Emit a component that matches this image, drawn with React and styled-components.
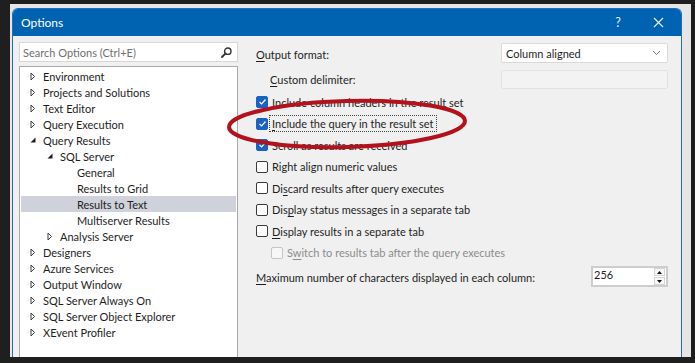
import React from 'react';
import styled, { createGlobalStyle } from 'styled-components';

const UI_FONT = `Lato, "Noto Sans", "Liberation Sans", sans-serif`;

const GlobalStyle = createGlobalStyle`
    html, body {
        margin: 0;
        padding: 0;
        background: #1f1f1f;
    }
    * {
        box-sizing: border-box;
    }
`;

const Page = styled.div`
    position: relative;
    width: 695px;
    height: 363px;
    overflow: hidden;
    background: #1f1f1f;
    padding: 4px 0 0 10px;
    font-family: ${UI_FONT};
    font-size: 11px;
    color: #1e1e1e;
`;

const Frame = styled.div`
    width: 681px;
    height: 353px;
    background: #e6e6e6;
    padding: 4px 9px 0 2px;
    display: flex;
`;

const Dialog = styled.div`
    flex: 1;
    display: flex;
    flex-direction: column;
    background: #f0f0f0;
    border: 1px solid #1f6fc0;
    border-bottom: 0;
    border-radius: 6px 6px 0 0;
    overflow: hidden;
`;

const TitleBar = styled.div`
    height: 27px;
    flex-shrink: 0;
    background: #0063b1;
    color: #fff;
    display: flex;
    align-items: center;
    padding: 0 3px 1px 8px;
    font-size: 12px;
`;

const TitleText = styled.span`
    flex: 1;
`;

const TitleButton = styled.span`
    width: 40px;
    display: flex;
    align-items: center;
    justify-content: center;
    font-size: 12.5px;
    color: #e8f0fa;
`;

const Body = styled.div`
    flex: 1;
    display: flex;
    min-height: 0;
`;

const LeftPane = styled.div`
    width: 225px;
    padding: 6px 0 0 6px;
    display: flex;
    flex-direction: column;
    gap: 4px;
`;

const SearchBox = styled.div`
    height: 20px;
    background: #fff;
    border: 1px solid #d6d6d6;
    display: flex;
    align-items: center;
    justify-content: space-between;
    padding: 0 5px 0 3px;
    color: #707070;
`;

const Tree = styled.div`
    flex: 1;
    background: #fff;
    border: 1px solid #a9a9a9;
    border-bottom: 0;
    padding: 1px;
`;

const TreeRow = styled.div`
    height: 16px;
    display: flex;
    align-items: center;
    padding-left: ${p => 4 + p.$level * 17}px;
    background: ${p => (p.$selected ? '#cfd1db' : 'transparent')};
    white-space: nowrap;
`;

const Toggle = styled.span`
    width: 18px;
    height: 16px;
    flex-shrink: 0;
    display: flex;
    align-items: center;
    padding-left: 5px;
`;

const RightPane = styled.div`
    flex: 1;
    padding: 7px 13px 0 18px;
    display: flex;
    flex-direction: column;
`;

const FieldRow = styled.div`
    display: flex;
    align-items: center;
    justify-content: space-between;
    height: ${p => p.$h}px;
    margin-top: ${p => p.$mt || 0}px;
    padding-left: ${p => p.$indent || 0}px;
`;

const FieldLabel = styled.span`
    padding-top: ${p => p.$nudge || 0}px;
`;

const Select = styled.div`
    width: 167px;
    height: 100%;
    background: #fff;
    border: 1px solid #d9d9d9;
    border-radius: 2px;
    display: flex;
    align-items: center;
    justify-content: space-between;
    padding: 0 6px 0 4px;
`;

const DisabledInput = styled.div`
    width: 167px;
    height: 100%;
    background: #f3f3f3;
    border: 1px solid #e2e2e2;
    border-radius: 2px;
`;

const CheckList = styled.div`
    margin-top: 2.5px;
    display: flex;
    flex-direction: column;
`;

const CheckRow = styled.div`
    height: 21.5px;
    display: flex;
    align-items: center;
    padding-left: ${p => (p.$indent ? 15 : 0)}px;
    color: ${p => (p.$disabled ? '#8c8c8c' : '#1e1e1e')};
    white-space: nowrap;
`;

const Box = styled.span`
    width: 12px;
    height: 12px;
    flex-shrink: 0;
    margin-right: 3px;
    border-radius: 2px;
    display: flex;
    align-items: center;
    justify-content: center;
    background: ${p => (p.$checked ? '#1a62c4' : p.$disabled ? '#f7f7f7' : '#fff')};
    border: 1px solid ${p => (p.$checked ? '#1a62c4' : p.$disabled ? '#c4c4c4' : '#3a3a3a')};
`;

const CheckText = styled.span`
    padding: 0 1px;
    outline: ${p => (p.$focused ? '1px dotted #444' : 'none')};
    outline-offset: 1px;
`;

const Key = styled.span`
    text-decoration: underline;
    text-underline-offset: 2px;
`;

const Spin = styled.div`
    width: 77px;
    height: 100%;
    background: #fff;
    border: 2px solid #cdcdcd;
    display: flex;
    justify-content: space-between;
    padding: 0 1px 0 1px;
    font-size: 11px;
`;

const SpinButtons = styled.div`
    display: flex;
    flex-direction: column;
    justify-content: center;
    gap: 1px;
`;

const SpinButton = styled.span`
    width: 11px;
    height: 8px;
    border: 1px solid #d4d4d4;
    display: flex;
    align-items: center;
    justify-content: center;
    background: #f7f7f7;
`;

const Annotation = styled.svg`
    position: absolute;
    left: 0;
    top: 0;
    pointer-events: none;
`;

const tree = [
    { label: 'Environment', level: 0, state: 'closed' },
    { label: 'Projects and Solutions', level: 0, state: 'closed' },
    { label: 'Text Editor', level: 0, state: 'closed' },
    { label: 'Query Execution', level: 0, state: 'closed' },
    { label: 'Query Results', level: 0, state: 'open' },
    { label: 'SQL Server', level: 1, state: 'open' },
    { label: 'General', level: 2 },
    { label: 'Results to Grid', level: 2 },
    { label: 'Results to Text', level: 2, selected: true },
    { label: 'Multiserver Results', level: 2 },
    { label: 'Analysis Server', level: 1, state: 'closed' },
    { label: 'Designers', level: 0, state: 'closed' },
    { label: 'Azure Services', level: 0, state: 'closed' },
    { label: 'Output Window', level: 0, state: 'closed' },
    { label: 'SQL Server Always On', level: 0, state: 'closed' },
    { label: 'SQL Server Object Explorer', level: 0, state: 'closed' },
    { label: 'XEvent Profiler', level: 0, state: 'closed' },
];

const checks = [
    { text: 'Include column headers in the result set', checked: true },
    { text: 'Include the query in the result set', checked: true, focused: true, key: 0 },
    { text: 'Scroll as results are received', checked: true },
    { text: 'Right align numeric values' },
    { text: 'Discard results after query executes', key: 2 },
    { text: 'Display status messages in a separate tab', key: 3 },
    { text: 'Display results in a separate tab', key: 0 },
    { text: 'Switch to results tab after the query executes', disabled: true, indent: true, key: 1 },
];

const withKey = (text, key) => {
    if (key === undefined) return text;
    return (
        <>
            {text.slice(0, key)}
            <Key>{text[key]}</Key>
            {text.slice(key + 1)}
        </>
    );
};

const Caret = ({ state }) => {
    if (state === 'open') {
        return (
            <svg width="6" height="6" viewBox="0 0 6 6">
                <polygon points="5.5,0.5 5.5,5.5 0.5,5.5" fill="#1e1e1e" />
            </svg>
        );
    }
    if (state === 'closed') {
        return (
            <svg width="6" height="9" viewBox="0 0 6 9">
                <polygon points="1,1 4.5,4.5 1,8" fill="none" stroke="#3c3c3c" strokeWidth="1" />
            </svg>
        );
    }
    return null;
};

const SearchIcon = () => (
    <svg width="11" height="11" viewBox="0 0 11 11">
        <circle cx="6.8" cy="4.2" r="3.2" fill="none" stroke="#333" strokeWidth="1.4" />
        <line x1="4.6" y1="6.4" x2="1" y2="10" stroke="#333" strokeWidth="1.8" strokeLinecap="round" />
    </svg>
);

const Chevron = () => (
    <svg width="9" height="6" viewBox="0 0 9 6">
        <polyline points="1,1 4.5,4.5 8,1" fill="none" stroke="#777" strokeWidth="1" />
    </svg>
);

const Tick = () => (
    <svg width="9" height="8" viewBox="0 0 9 8">
        <polyline points="1.5,4 3.6,6 7.5,1.5" fill="none" stroke="#fff" strokeWidth="1.2" />
    </svg>
);

const CloseIcon = () => (
    <svg width="11" height="11" viewBox="0 0 11 11">
        <path d="M1 1 L10 10 M10 1 L1 10" stroke="#e8f0fa" strokeWidth="1.1" />
    </svg>
);

const Arrow = ({ up }) => (
    <svg width="5" height="3" viewBox="0 0 5 3">
        <polygon points={up ? '0,3 2.5,0 5,3' : '0,0 2.5,3 5,0'} fill="#111" />
    </svg>
);

const App = () => (
    <Page>
        <GlobalStyle />
        <Frame>
            <Dialog>
                <TitleBar>
                    <TitleText>Options</TitleText>
                    <TitleButton>?</TitleButton>
                    <TitleButton><CloseIcon /></TitleButton>
                </TitleBar>
                <Body>
                    <LeftPane>
                        <SearchBox>
                            <span>Search Options (Ctrl+E)</span>
                            <SearchIcon />
                        </SearchBox>
                        <Tree>
                            {tree.map(item => (
                                <TreeRow key={item.label} $level={item.level} $selected={item.selected}>
                                    <Toggle><Caret state={item.state} /></Toggle>
                                    {item.label}
                                </TreeRow>
                            ))}
                        </Tree>
                    </LeftPane>
                    <RightPane>
                        <FieldRow $h={20}>
                            <FieldLabel $nudge={3}>{withKey('Output format:', 0)}</FieldLabel>
                            <Select>
                                <span>Column aligned</span>
                                <Chevron />
                            </Select>
                        </FieldRow>
                        <FieldRow $h={19} $mt={7} $indent={14}>
                            <FieldLabel>{withKey('Custom delimiter:', 0)}</FieldLabel>
                            <DisabledInput />
                        </FieldRow>
                        <CheckList>
                            {checks.map(c => (
                                <CheckRow key={c.text} $indent={c.indent} $disabled={c.disabled}>
                                    <Box $checked={c.checked} $disabled={c.disabled}>
                                        {c.checked && <Tick />}
                                    </Box>
                                    <CheckText $focused={c.focused}>{withKey(c.text, c.key)}</CheckText>
                                </CheckRow>
                            ))}
                        </CheckList>
                        <FieldRow $h={21} $mt={2.5}>
                            <FieldLabel $nudge={2}>{withKey('Maximum number of characters displayed in each column:', 0)}</FieldLabel>
                            <Spin>
                                <span>256</span>
                                <SpinButtons>
                                    <SpinButton><Arrow up /></SpinButton>
                                    <SpinButton><Arrow /></SpinButton>
                                </SpinButtons>
                            </Spin>
                        </FieldRow>
                    </RightPane>
                </Body>
            </Dialog>
        </Frame>
        <Annotation width="695" height="363" viewBox="0 0 695 363">
            <ellipse
                cx="347"
                cy="124"
                rx="118"
                ry="23"
                transform="rotate(-1.5 347 124)"
                fill="none"
                stroke="#b3121c"
                strokeWidth="4"
            />
        </Annotation>
    </Page>
);

export default App;
